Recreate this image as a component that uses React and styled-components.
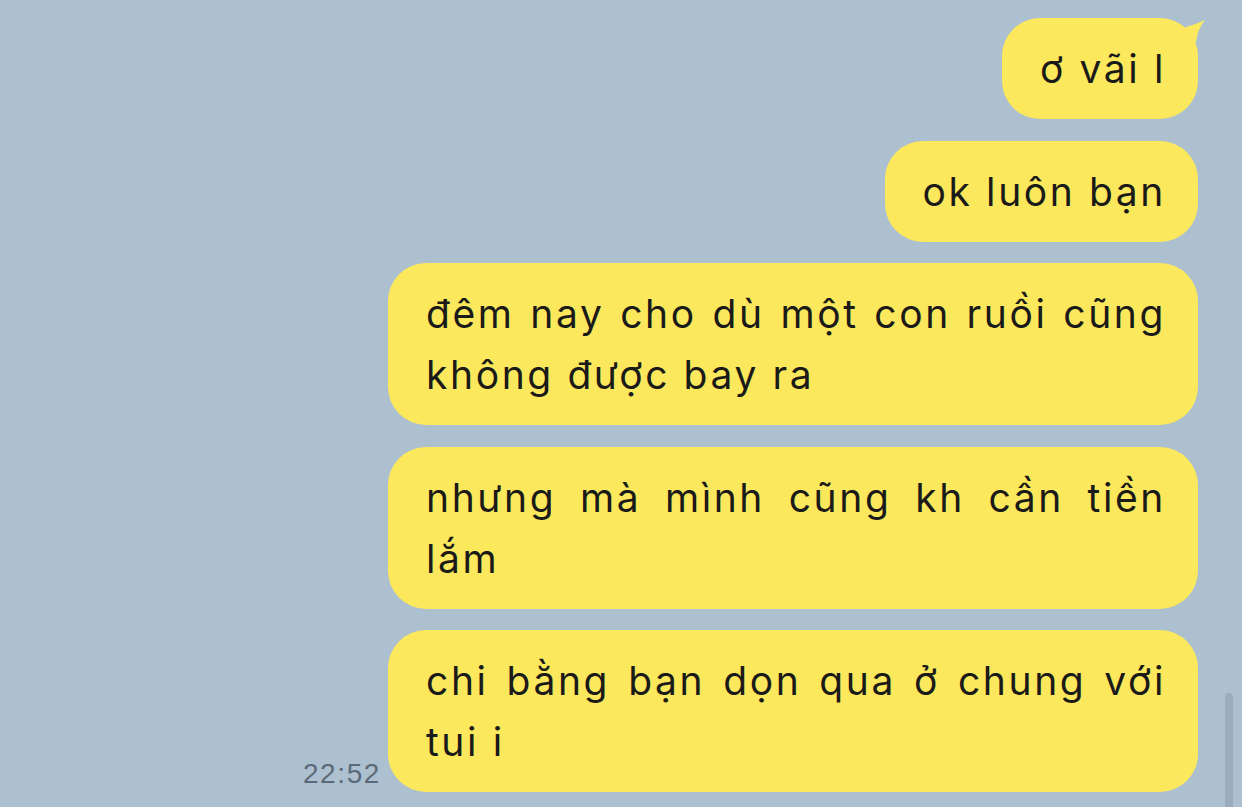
import React from "react";
import styled, { createGlobalStyle } from "styled-components";

const Global = createGlobalStyle`
  html, body { margin: 0; padding: 0; }
  body {
    background: #adc0cf;
    font-family: Inter, "Noto Sans", "Liberation Sans", sans-serif;
    overflow: hidden;
  }
`;

const Screen = styled.div`
  position: relative;
  width: 1242px;
  height: 807px;
  background: #adc0cf;
  overflow: hidden;
`;

const Feed = styled.div`
  display: flex;
  flex-direction: column;
  align-items: stretch;
  gap: 21.5px;
  padding: 18px 44px 0 0;
`;

const Row = styled.div`
  display: flex;
  justify-content: flex-end;
  align-items: flex-end;
  gap: 7px;
`;

const Bubble = styled.div`
  position: relative;
  max-width: 810px;
  box-sizing: border-box;
  padding: 20px 32px 20px 38px;
  background: #fbe85c;
  border-radius: 38px;
  color: #1a1a18;
  font-size: 39px;
  line-height: 61px;
  letter-spacing: 2.6px;
  text-align: justify;
`;

const Tail = styled.svg`
  position: absolute;
  top: 0;
  left: calc(100% - 18px);
  width: 26px;
  height: 30px;
  overflow: visible;
`;

const Time = styled.span`
  font-family: "Liberation Sans", Arial, sans-serif;
  font-size: 28px;
  line-height: 28px;
  letter-spacing: 1.6px;
  color: #5b6978;
  padding-bottom: 4px;
`;

const Scrollbar = styled.div`
  position: absolute;
  left: 1225px;
  top: 693px;
  width: 8px;
  height: 130px;
  border-radius: 4px;
  background: #9badbc;
`;

const messages = [
  { text: "ơ vãi l", tail: true },
  { text: "ok luôn bạn" },
  { text: "đêm nay cho dù một con ruồi cũng không được bay ra" },
  { text: "nhưng mà mình cũng kh cần tiền lắm" },
  { text: "chi bằng bạn dọn qua ở chung với tui i", time: "22:52" },
];

export default function App() {
  return (
    <Screen>
      <Global />
      <Feed>
        {messages.map((m, i) => (
          <Row key={i}>
            {m.time && <Time>{m.time}</Time>}
            <Bubble>
              {m.tail && (
                <Tail viewBox="0 0 26 30">
                  <path
                    d="M0 16 L6 9 Q14 7 25 2 Q18 10 16 24 L0 26 Z"
                    fill="#fbe85c"
                  />
                </Tail>
              )}
              {m.text}
            </Bubble>
          </Row>
        ))}
      </Feed>
      <Scrollbar />
    </Screen>
  );
}
